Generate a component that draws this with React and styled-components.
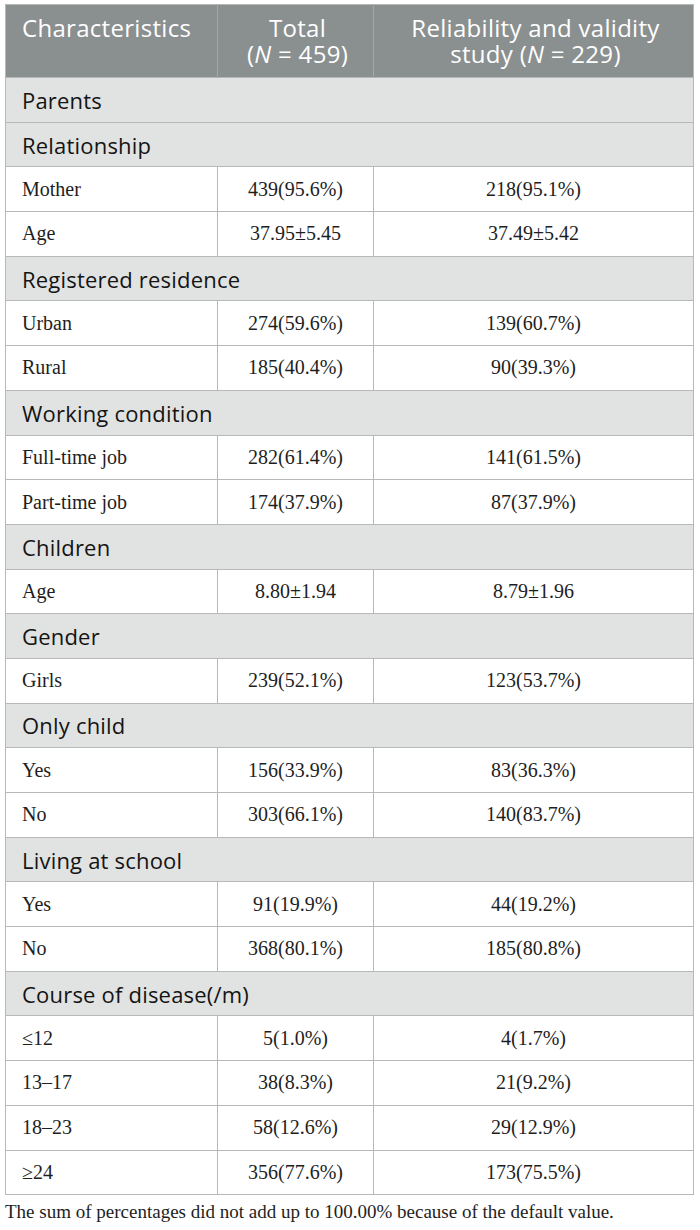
import React from 'react'
import styled, { createGlobalStyle } from 'styled-components'

const GlobalStyle = createGlobalStyle`
    html, body {
        margin: 0;
        padding: 0;
        background: #ffffff;
    }
`

const Page = styled.div`
    width: 700px;
    padding: 4px 7px 0 5px;
    box-sizing: border-box;
`

const Table = styled.table`
    width: 688px;
    border-collapse: collapse;
    table-layout: fixed;
    border: 1px solid #b7b9b8;
`

const HeadCell = styled.th`
    background: #8a8f90;
    color: #ffffff;
    font-family: 'Open Sans', 'DejaVu Sans', sans-serif;
    font-weight: 400;
    font-size: 24px;
    line-height: 26px;
    letter-spacing: 0.3px;
    text-align: ${({ align }) => align || 'center'};
    vertical-align: top;
    padding: 10px 12px 10px 16px;
    height: 73px;
    box-sizing: border-box;
    border-left: 1px solid #a3a7a8;
    &:first-child {
        border-left: none;
    }
`

const SectionCell = styled.td`
    background: #e1e3e2;
    color: #141414;
    font-family: 'Open Sans', 'DejaVu Sans', sans-serif;
    font-size: 22px;
    letter-spacing: 0.2px;
    padding: 0 16px;
    height: 44.7px;
    box-sizing: border-box;
    border-top: 1px solid #b7b9b8;
`

const Cell = styled.td`
    background: #ffffff;
    color: #1e1e1e;
    font-family: 'Liberation Serif', 'Times New Roman', serif;
    font-size: 20px;
    text-align: ${({ align }) => align || 'center'};
    padding: 0 16px;
    height: 44.7px;
    box-sizing: border-box;
    border-top: 1px solid #b7b9b8;
    border-left: 1px solid #b7b9b8;
    &:first-child {
        border-left: none;
    }
`

const Note = styled.p`
    margin: 6px 0 0;
    font-family: 'Liberation Serif', 'Times New Roman', serif;
    font-size: 19px;
    color: #1e1e1e;
    white-space: nowrap;
`

const rows = [
    { section: 'Parents' },
    { section: 'Relationship' },
    { label: 'Mother', total: '439(95.6%)', study: '218(95.1%)' },
    { label: 'Age', total: '37.95±5.45', study: '37.49±5.42' },
    { section: 'Registered residence' },
    { label: 'Urban', total: '274(59.6%)', study: '139(60.7%)' },
    { label: 'Rural', total: '185(40.4%)', study: '90(39.3%)' },
    { section: 'Working condition' },
    { label: 'Full-time job', total: '282(61.4%)', study: '141(61.5%)' },
    { label: 'Part-time job', total: '174(37.9%)', study: '87(37.9%)' },
    { section: 'Children' },
    { label: 'Age', total: '8.80±1.94', study: '8.79±1.96' },
    { section: 'Gender' },
    { label: 'Girls', total: '239(52.1%)', study: '123(53.7%)' },
    { section: 'Only child' },
    { label: 'Yes', total: '156(33.9%)', study: '83(36.3%)' },
    { label: 'No', total: '303(66.1%)', study: '140(83.7%)' },
    { section: 'Living at school' },
    { label: 'Yes', total: '91(19.9%)', study: '44(19.2%)' },
    { label: 'No', total: '368(80.1%)', study: '185(80.8%)' },
    { section: 'Course of disease(/m)' },
    { label: '≤12', total: '5(1.0%)', study: '4(1.7%)' },
    { label: '13–17', total: '38(8.3%)', study: '21(9.2%)' },
    { label: '18–23', total: '58(12.6%)', study: '29(12.9%)' },
    { label: '≥24', total: '356(77.6%)', study: '173(75.5%)' },
]

const App = () => (
    <Page>
        <GlobalStyle />
        <Table>
            <colgroup>
                <col style={{ width: 212 }} />
                <col style={{ width: 156 }} />
                <col style={{ width: 320 }} />
            </colgroup>
            <thead>
                <tr>
                    <HeadCell align="left">Characteristics</HeadCell>
                    <HeadCell>
                        Total
                        <br />
                        (<i>N</i> = 459)
                    </HeadCell>
                    <HeadCell>
                        Reliability and validity
                        <br />
                        study (<i>N</i> = 229)
                    </HeadCell>
                </tr>
            </thead>
            <tbody>
                {rows.map((row, i) =>
                    row.section ? (
                        <tr key={i}>
                            <SectionCell colSpan={3}>{row.section}</SectionCell>
                        </tr>
                    ) : (
                        <tr key={i}>
                            <Cell align="left">{row.label}</Cell>
                            <Cell>{row.total}</Cell>
                            <Cell>{row.study}</Cell>
                        </tr>
                    )
                )}
            </tbody>
        </Table>
        <Note>The sum of percentages did not add up to 100.00% because of the default value.</Note>
    </Page>
)

export default App
